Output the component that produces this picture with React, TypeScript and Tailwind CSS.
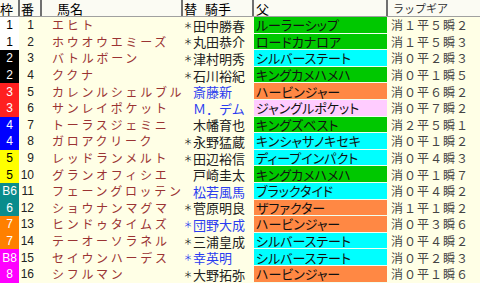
import React from 'react'

type Row = {
  waku: string
  num: number
  name: string
  mark: boolean
  jockey: string
  blue: boolean
  sire: string
  sireColor: string
  gear: string
}

const wakuStyle: Record<string, string> = {
  '1': 'bg-white text-black',
  '2': 'bg-black text-white',
  '3': 'bg-[#ff2020] text-white',
  '4': 'bg-[#0000ff] text-white',
  '5': 'bg-[#ffff00] text-black',
  '6': 'bg-[#0a8c8c] text-white',
  '7': 'bg-[#ff8000] text-white',
  '8': 'bg-[#ff00ff] text-white',
}

const sireBg: Record<string, string> = {
  green: 'bg-[#00c800]',
  cyan: 'bg-[#00ffff]',
  orange: 'bg-[#ff8844]',
  pink: 'bg-[#ffccff]',
}

const rows: Row[] = [
  { waku: '1', num: 1, name: 'エヒト', mark: true, jockey: '田中勝春', blue: false, sire: 'ルーラーシップ', sireColor: 'green', gear: '消１平５瞬２' },
  { waku: '1', num: 2, name: 'ホウオウエミーズ', mark: true, jockey: '丸田恭介', blue: false, sire: 'ロードカナロア', sireColor: 'green', gear: '消１平５瞬３' },
  { waku: '2', num: 3, name: 'バトルボーン', mark: true, jockey: '津村明秀', blue: false, sire: 'シルバーステート', sireColor: 'cyan', gear: '消０平２瞬３' },
  { waku: '2', num: 4, name: 'ククナ', mark: true, jockey: '石川裕紀', blue: false, sire: 'キングカメハメハ', sireColor: 'green', gear: '消０平１瞬５' },
  { waku: '3', num: 5, name: 'カレンルシェルブル', mark: false, jockey: '斎藤新', blue: true, sire: 'ハービンジャー', sireColor: 'orange', gear: '消０平６瞬２' },
  { waku: '3', num: 6, name: 'サンレイポケット', mark: false, jockey: 'Ｍ．デム', blue: true, sire: 'ジャングルポケット', sireColor: 'pink', gear: '消０平７瞬２' },
  { waku: '4', num: 7, name: 'トーラスジェミニ', mark: false, jockey: '木幡育也', blue: false, sire: 'キングズベスト', sireColor: 'green', gear: '消２平５瞬１' },
  { waku: '4', num: 8, name: 'ガロアクリーク', mark: true, jockey: '永野猛蔵', blue: false, sire: 'キンシャサノキセキ', sireColor: 'cyan', gear: '消０平１瞬２' },
  { waku: '5', num: 9, name: 'レッドランメルト', mark: true, jockey: '田辺裕信', blue: false, sire: 'ディープインパクト', sireColor: 'cyan', gear: '消０平４瞬３' },
  { waku: '5', num: 10, name: 'グランオフィシエ', mark: false, jockey: '戸崎圭太', blue: false, sire: 'キングカメハメハ', sireColor: 'green', gear: '消０平１瞬７' },
  { waku: 'B6', num: 11, name: 'フェーングロッテン', mark: false, jockey: '松若風馬', blue: true, sire: 'ブラックタイド', sireColor: 'cyan', gear: '消０平４瞬２' },
  { waku: '6', num: 12, name: 'ショウナンマグマ', mark: true, jockey: '菅原明良', blue: false, sire: 'ザファクター', sireColor: 'orange', gear: '消１平１瞬２' },
  { waku: '7', num: 13, name: 'ヒンドゥタイムズ', mark: true, jockey: '団野大成', blue: true, sire: 'ハービンジャー', sireColor: 'orange', gear: '消０平３瞬６' },
  { waku: '7', num: 14, name: 'テーオーソラネル', mark: true, jockey: '三浦皇成', blue: false, sire: 'シルバーステート', sireColor: 'cyan', gear: '消０平４瞬２' },
  { waku: 'B8', num: 15, name: 'セイウンハーデス', mark: true, jockey: '幸英明', blue: true, sire: 'シルバーステート', sireColor: 'cyan', gear: '消０平２瞬３' },
  { waku: '8', num: 16, name: 'シフルマン', mark: true, jockey: '大野拓弥', blue: false, sire: 'ハービンジャー', sireColor: 'orange', gear: '消０平１瞬６' },
]

const cols = 'grid grid-cols-[20px_22px_141px_71px_134px_92px]'
const jp = "font-['Noto_Sans_CJK_JP',sans-serif]"

export default function App() {
  return (
    <div className={`w-[480px] h-[283px] overflow-hidden bg-[#ffffe6] ${jp} leading-none`}>
      {/* header */}
      <div className={`${cols} h-[17px] bg-[#fbfbf3] border-b border-[#a0a0a0] text-[13px] text-black`}>
        <div className="flex items-center border-r-2 border-[#707070]">枠</div>
        <div className="flex items-center pl-[1px] border-r-2 border-[#707070]">番</div>
        <div className="flex items-center pl-[15px] border-r-2 border-[#707070]">馬名</div>
        <div className="flex items-center pl-[1px] border-r-2 border-[#707070]">
          替<span className="ml-[8px]">騎手</span>
        </div>
        <div className="flex items-center pl-[2px] border-r-2 border-[#707070]">父</div>
        <div className="flex items-center pl-[5px] text-[11px] text-[#333]">ラップギア</div>
      </div>

      {/* rows */}
      {rows.map((r) => (
        <div key={r.num} className={`${cols} h-[16.6px]`}>
          <div
            className={`flex items-center justify-center mr-[1px] font-['Liberation_Sans',sans-serif] text-[12px] ${wakuStyle[r.waku.replace('B', '')]}`}
          >
            {r.waku}
          </div>
          <div className="flex items-center justify-end pr-[8px] font-['Liberation_Sans',sans-serif] text-[12px] text-[#222]">
            {r.num}
          </div>
          <div className="flex items-center pl-[10px] text-[12px] tracking-[2.7px] text-[#9a3333] whitespace-nowrap">
            {r.name}
          </div>
          <div
            className={`flex items-center text-[13px] whitespace-nowrap ${r.blue ? 'text-[#2a3cf0]' : 'text-[#222]'}`}
          >
            <span className="w-[10px] shrink-0 text-[9px] text-center">{r.mark ? '＊' : ''}</span>
            {r.jockey}
          </div>
          <div
            className={`flex items-center pl-[2px] mr-[1px] border-b border-[#f0fff0] text-[13px] text-[#111] whitespace-nowrap [font-feature-settings:'palt'] ${sireBg[r.sireColor]}`}
          >
            {r.sire}
          </div>
          <div className="flex items-center pl-[3px] text-[12px] tracking-[1px] text-[#444] whitespace-nowrap">
            {r.gear}
          </div>
        </div>
      ))}
    </div>
  )
}
